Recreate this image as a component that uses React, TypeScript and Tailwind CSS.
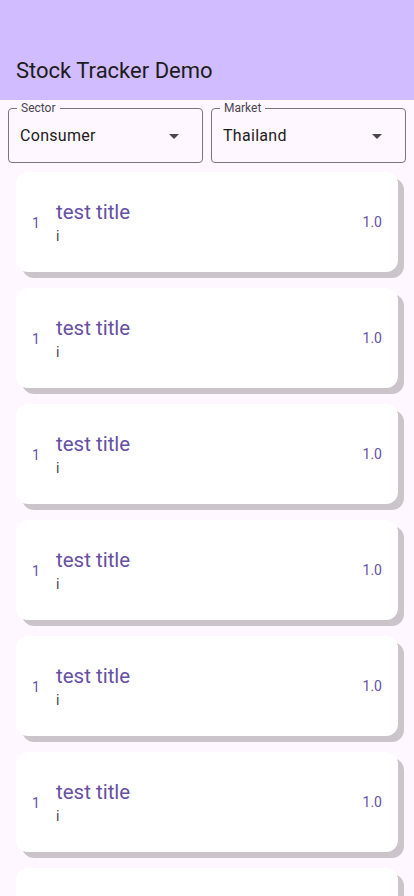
import React from "react";

function Dropdown({ label, value }: { label: string; value: string }) {
  return (
    <div className="relative flex-1 h-[55px] rounded-[4px] border border-[#79747e] flex items-center pl-[11px] pr-[16px]">
      <span className="absolute -top-[9px] left-[8px] px-[4px] bg-[#fef7ff] text-[12px] leading-[16px] text-[#49454f]">
        {label}
      </span>
      <span className="flex-1 text-[16px] text-[#1d1b20] tracking-[0.3px]">{value}</span>
      <svg width="24" height="24" viewBox="0 0 24 24">
        <path d="M7 10l5 5 5-5z" fill="#49454f" />
      </svg>
    </div>
  );
}

function Card() {
  return (
    <div className="h-[100px] mr-[16px] rounded-[12px] bg-white shadow-[6px_6px_0_0_#cbc5cb] flex items-center pl-[16px] pr-[16px]">
      <span className="w-[24px] text-[14px] leading-[20px] text-[#6750a4] pt-[1px]">1</span>
      <div className="flex-1 flex flex-col">
        <span className="text-[20.5px] leading-[26px] text-[#6750a4]">test title</span>
        <span className="text-[14px] leading-[20px] text-[#49454f] mt-[1px]">i</span>
      </div>
      <span className="text-[14px] text-[#6750a4]">1.0</span>
    </div>
  );
}

export default function App() {
  return (
    <div
      className="w-[414px] h-[896px] overflow-hidden bg-[#fef7ff] flex flex-col"
      style={{ fontFamily: "Roboto, 'Noto Sans', sans-serif" }}
    >
      <div className="h-[100px] bg-[#d0bcff] flex items-end pl-[16px] pb-[15px] shrink-0">
        <span className="text-[22px] leading-[28px] text-[#1d1b20]">Stock Tracker Demo</span>
      </div>
      <div className="flex gap-[8px] px-[8px] pt-[8px] shrink-0">
        <Dropdown label="Sector" value="Consumer" />
        <Dropdown label="Market" value="Thailand" />
      </div>
      <div className="flex flex-col gap-[16px] pl-[16px] pt-[9px]">
        {Array.from({ length: 7 }).map((_, i) => (
          <Card key={i} />
        ))}
      </div>
    </div>
  );
}
